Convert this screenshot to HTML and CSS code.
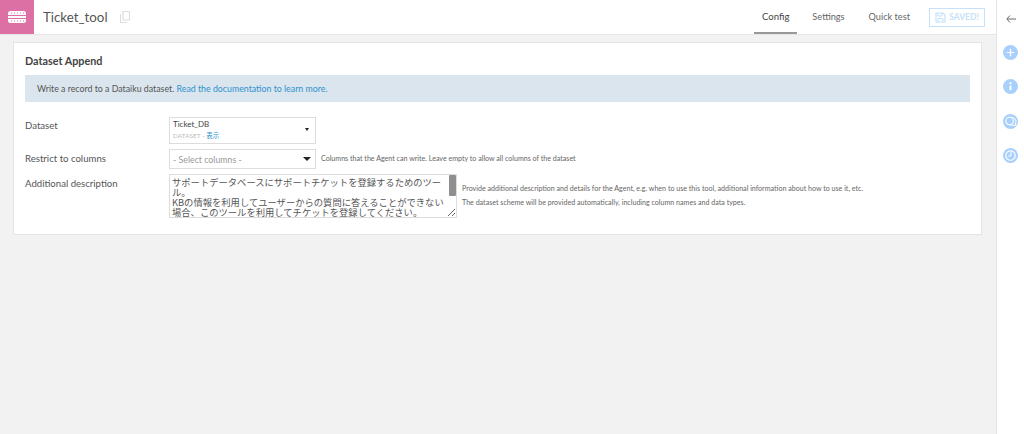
FILE: index.html
```html
<!DOCTYPE html>
<html lang="ja">
<head>
<meta charset="utf-8">
<title>Ticket_tool</title>
<link rel="stylesheet" href="styles.css">
</head>
<body>
<div class="app">
  <div class="main">
    <header class="topbar">
      <div class="logo">
        <svg width="18" height="12" viewBox="0 0 18 12"><rect x="0" y="0" width="18" height="12" rx="2.500" fill="#fff"/><path d="M0 4.500h18M0 7.500h18" stroke="#dc70a4" stroke-width="1"/><path d="M3 2h1M6 2h1M9 2h1M12 2h1M15 2h1M3 10h1M6 10h1M9 10h1M12 10h1M15 10h1" stroke="#dc70a4" stroke-width="1.200"/></svg>
      </div>
      <h1 class="name">Ticket_tool</h1>
      <svg class="copy" width="10" height="12" viewBox="0 0 10 12"><path d="M3 .5h6.500v8.500H3zM.5 3v8.500H7" fill="none" stroke="#dedede" stroke-width="1.200"/></svg>
      <nav class="tabs">
        <a class="tab active">Config</a>
        <a class="tab">Settings</a>
        <a class="tab">Quick test</a>
      </nav>
      <div class="saved">
        <svg width="11" height="11" viewBox="0 0 11 11"><path d="M1 1h7l2 2v7H1z" fill="none" stroke="#c6e1fb" stroke-width="1.200"/><path d="M3 1v3h4V1M3 10V6.500h5V10" fill="none" stroke="#c6e1fb"/></svg>
        <span>SAVED!</span>
      </div>
    </header>
    <main class="content">
      <section class="card">
        <h2 class="title">Dataset Append</h2>
        <div class="alert">Write a record to a Dataiku dataset. <a class="link">Read the documentation to learn more.</a></div>
        <div class="row row-dataset">
          <label class="label">Dataset</label>
          <div class="picker">
            <div class="picker-text">
              <div class="picker-name">Ticket_DB</div>
              <div class="picker-sub"><span class="picker-type">DATASET</span> - <a class="link">表示</a></div>
            </div>
            <span class="caret small"></span>
          </div>
        </div>
        <div class="row row-restrict">
          <label class="label">Restrict to columns</label>
          <div class="select"><span>- Select columns -</span><span class="caret"></span></div>
          <p class="help help-inline">Columns that the Agent can write. Leave empty to allow all columns of the dataset</p>
        </div>
        <div class="row row-desc">
          <label class="label">Additional description</label>
          <div class="desc-wrap">
            <textarea class="desc" readonly>サポートデータベースにサポートチケットを登録するためのツール。
KBの情報を利用してユーザーからの質問に答えることができない場合、このツールを利用してチケットを登録してください。</textarea>
            <span class="thumb"></span>
          </div>
          <div class="help-stack">
            <p class="help">Provide additional description and details for the Agent, e.g. when to use this tool, additional information about how to use it, etc.</p>
            <p class="help">The dataset scheme will be provided automatically, including column names and data types.</p>
          </div>
        </div>
      </section>
    </main>
  </div>
  <aside class="side">
    <svg class="back" width="10" height="8" viewBox="0 0 10 8"><path d="M4 .5 .8 4 4 7.500M1 4h9" fill="none" stroke="#666" stroke-width="1"/></svg>
    <svg class="sicon" width="15" height="15" viewBox="0 0 16 16"><circle cx="8" cy="8" r="8" fill="#a9d0fc"/><path d="M8 4v8M4 8h8" stroke="#fff" stroke-width="1.300"/></svg>
    <svg class="sicon" width="15" height="15" viewBox="0 0 16 16"><circle cx="8" cy="8" r="8" fill="#a9d0fc"/><path d="M8 7v5" stroke="#fff" stroke-width="2"/><circle cx="8" cy="4.500" r="1.200" fill="#fff"/></svg>
    <svg class="sicon" width="15" height="15" viewBox="0 0 16 16"><circle cx="8" cy="8" r="8" fill="#a9d0fc"/><circle cx="7" cy="7.500" r="4" fill="none" stroke="#fff" stroke-width="1.200"/><path d="M9 4a4 4 0 0 1 4.500 5.500V12H8" fill="none" stroke="#fff" stroke-width="1"/></svg>
    <svg class="sicon" width="15" height="15" viewBox="0 0 16 16"><circle cx="8" cy="8" r="8" fill="#a9d0fc"/><circle cx="8" cy="8" r="5" fill="none" stroke="#fff" stroke-width="1.200"/><path d="M8.500 4.500V8.500H5.500" fill="none" stroke="#fff"/></svg>
  </aside>
</div>
</body>
</html>
```
FILE: styles.css
```css
* { box-sizing: border-box; }
html, body { margin: 0; height: 100%; }
body {
  font-family: Lato, "Noto Sans CJK JP", sans-serif;
  color: #444;
  background: #f2f2f2;
  overflow: hidden;
}
.app { display: flex; height: 434px; }
.main { flex: 1; min-width: 0; display: flex; flex-direction: column; }
.topbar {
  height: 35px;
  flex: none;
  display: flex;
  align-items: center;
  background: #fff;
  border-bottom: 1px solid #e6e6e6;
}
.logo {
  width: 34px;
  height: 34px;
  flex: none;
  display: flex;
  align-items: center;
  justify-content: center;
  background: #dc70a4;
}
.name {
  margin: 0 0 0 9px;
  font-size: 13.300px;
  font-weight: 400;
  color: #555;
}
.copy { margin-left: 12px; }
.tabs { display: flex; margin-left: auto; height: 34px; }
.tab {
  display: flex;
  align-items: center;
  padding: 0 7px;
  font-size: 9.200px;
  color: #666;
  border-bottom: 2px solid transparent;
}
.tab.active { padding: 0 8px; font-size: 9.500px; color: #444; border-bottom-color: #999; }
.tab:nth-child(2) { margin-left: 8px; }
.tab:nth-child(3) { margin-left: 10px; }
.saved {
  width: 56px;
  height: 19px;
  margin: 0 11px 0 12px;
  display: flex;
  align-items: center;
  justify-content: center;
  gap: 3px;
  border: 1px solid #c6e1fb;
  color: #c6e1fb;
  font-size: 8.500px;
  font-weight: 700;
}
.content { padding: 7px 14px 0 13px; }
.card {
  height: 193px;
  padding: 11px;
  background: #fff;
  border: 1px solid #e4e4e4;
}
.title {
  margin: 0;
  font-size: 10.800px;
  line-height: 14px;
  font-weight: 700;
  color: #444;
}
.alert {
  margin-top: 7px;
  height: 27px;
  padding: 0 12px;
  display: flex;
  align-items: center;
  white-space: pre;
  background: #dae5ed;
  font-size: 8.800px;
  color: #555;
}
.link { color: #2f92cf; }
.row { display: flex; align-items: flex-start; }
.row-dataset { margin-top: 15px; }
.row-restrict { margin-top: 5px; }
.row-desc { margin-top: 5px; }
.label {
  width: 144px;
  flex: none;
  font-size: 9.600px;
  line-height: 13px;
  color: #555;
}
.row-dataset .label { margin-top: 2px; }
.row-restrict .label { margin-top: 3px; }
.row-desc .label { margin-top: 3px; }
.picker {
  width: 147px;
  height: 27px;
  padding: 0 3px 2px;
  display: flex;
  align-items: center;
  justify-content: space-between;
  border: 1px solid #ddd;
  background: #fff;
}
.picker-name { font-size: 8px; line-height: 11px; color: #444; }
.picker-sub { font-size: 6.500px; line-height: 11px; color: #999; }
.picker-type { color: #bbb; }
.caret {
  width: 0;
  height: 0;
  margin-right: 1px;
  border-left: 4px solid transparent;
  border-right: 4px solid transparent;
  border-top: 4px solid #222;
}
.caret.small {
  margin-right: 3px;
  border-left-width: 2.500px;
  border-right-width: 2.500px;
  border-top-width: 3px;
}
.select {
  width: 147px;
  height: 20px;
  flex: none;
  padding: 0 3px;
  display: flex;
  align-items: center;
  justify-content: space-between;
  border: 1px solid #ddd;
  background: #fff;
  font-size: 8.800px;
  color: #999;
}
.help { margin: 0; font-size: 7.100px; line-height: 9px; color: #666; white-space: nowrap; }
.help-inline { margin: 5px 0 0 5px; }
.desc-wrap { position: relative; width: 288px; height: 44px; flex: none; }
.desc {
  display: block;
  width: 100%;
  height: 100%;
  margin: 0;
  padding: 2px 10px 0 2px;
  border: 1px solid #ddd;
  outline: none;
  font-family: "Noto Sans CJK JP", sans-serif;
  font-size: 9.300px;
  line-height: 10px;
  color: #555;
  background: #fff;
  overflow: hidden;
  resize: vertical;
}
.thumb {
  position: absolute;
  top: 1px;
  right: 1px;
  width: 7px;
  height: 21px;
  background: #8f8f8f;
  border-radius: 1px;
}
.help-stack { margin: 10px 0 0 5px; display: flex; flex-direction: column; gap: 5px; }
.side {
  width: 28px;
  flex: none;
  display: flex;
  flex-direction: column;
  align-items: center;
  padding-top: 15px;
  background: #fff;
  border-left: 1px solid #e4e4e4;
}
.back { margin-bottom: 22px; }
.sicon { margin-bottom: 19.330px; }
```
